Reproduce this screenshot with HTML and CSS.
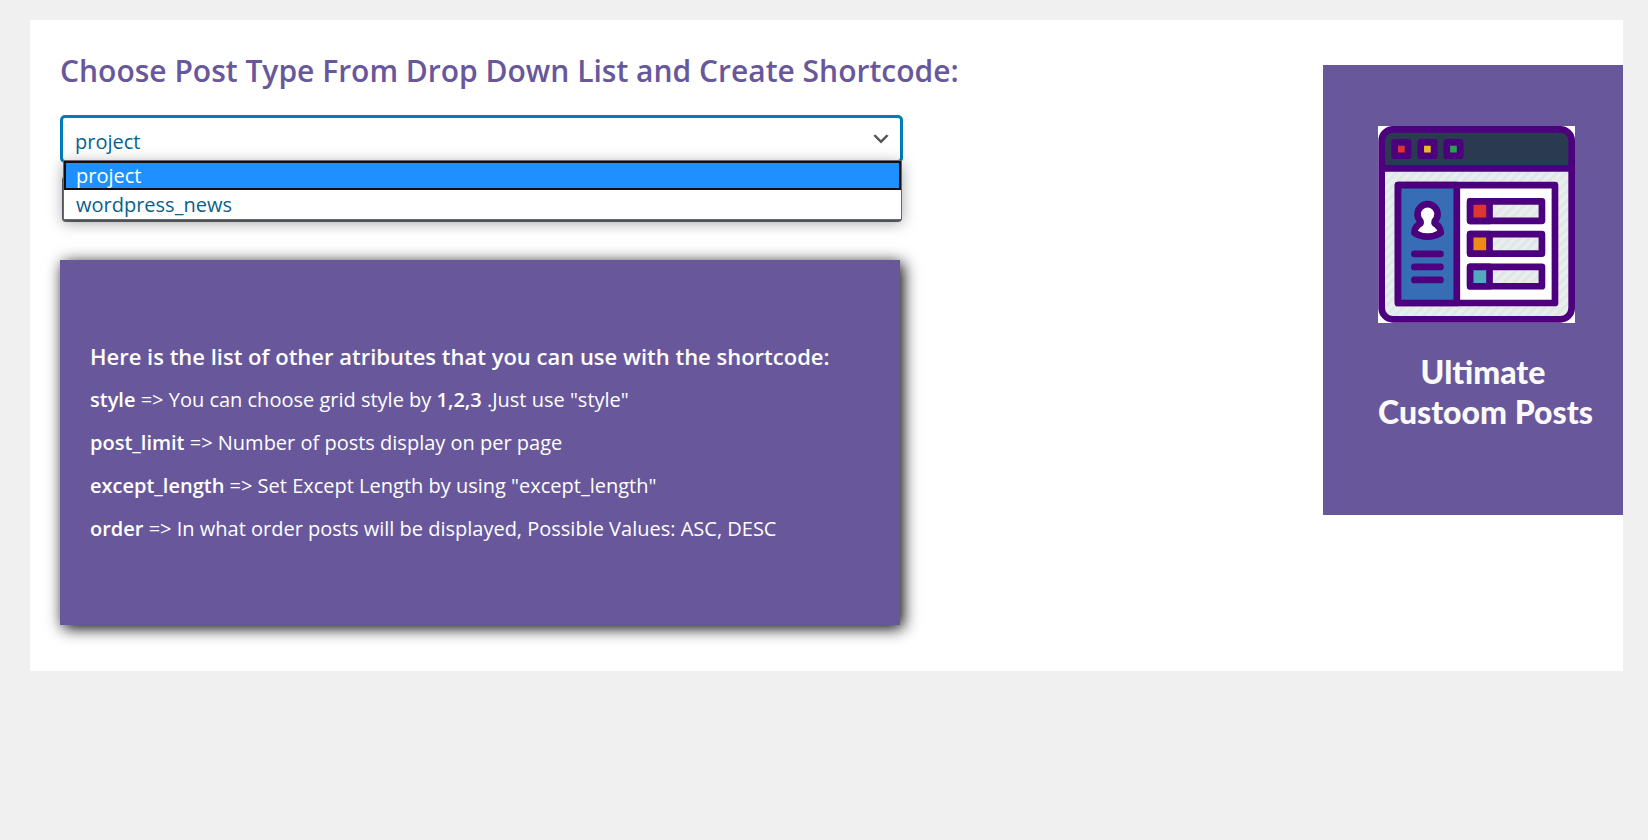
FILE: index.html
```html
<!DOCTYPE html>
<html lang="en">
<head>
<meta charset="utf-8">
<title>Ultimate Custom Posts</title>
<link rel="stylesheet" href="styles.css">
</head>
<body>
<main class="card">
  <section class="content">
    <h1 class="title"><label for="post-type">Choose Post Type From Drop Down List and Create Shortcode:</label></h1>
    <form class="form">
      <div class="picker">
        <select class="picker-select" id="post-type">
          <option>project</option>
          <option>wordpress_news</option>
        </select>
        <svg class="picker-arrow" viewBox="0 0 20 20" aria-hidden="true"><path d="M5 6l5 5 5-5 2 1-7 7-7-7z" fill="#555"/></svg>
        <ul class="menu" role="listbox" aria-label="Post type">
          <li class="menu-item menu-item-active" role="option" aria-selected="true">project</li>
          <li class="menu-item" role="option" aria-selected="false">wordpress_news</li>
        </ul>
      </div>
      <input class="shortcode" type="text" readonly aria-label="Shortcode">
    </form>
    <div class="help">
      <h2 class="help-title">Here is the list of other atributes that you can use with the shortcode:</h2>
      <p class="help-line"><b>style</b> =&gt; You can choose grid style by <b>1,2,3</b> .Just use "style"</p>
      <p class="help-line"><b>post_limit</b> =&gt; Number of posts display on per page</p>
      <p class="help-line"><b>except_length</b> =&gt; Set Except Length by using "except_length"</p>
      <p class="help-line"><b>order</b> =&gt; In what order posts will be displayed, Possible Values: ASC, DESC</p>
    </div>
  </section>
  <aside class="banner">
    <svg class="banner-logo" viewBox="205 228 590 590" aria-hidden="true">
      <defs>
        <pattern id="hatch" width="20" height="20" patternUnits="userSpaceOnUse" patternTransform="rotate(45)">
          <rect width="20" height="20" fill="#e8eded"/>
          <rect width="8" height="20" fill="#dfe6e6"/>
        </pattern>
      </defs>
      <rect x="205" y="228" width="590" height="590" fill="#fff"/>
      <rect x="216" y="238" width="569" height="569" rx="34" fill="url(#hatch)"/>
      <path d="M216 355V272q0-34 34-34H751q34 0 34 34V355z" fill="#2a3a50"/>
      <path d="M216 355H785" stroke="#4d007e" stroke-width="20"/>
      <rect x="216" y="238" width="569" height="569" rx="34" fill="none" stroke="#4d007e" stroke-width="20"/>
      <g stroke="#4d007e" stroke-width="20" stroke-linejoin="round">
        <rect x="255" y="277" width="40" height="40" fill="#e0352f"/>
        <rect x="333" y="277" width="40" height="40" fill="#f0bd18"/>
        <rect x="411" y="277" width="40" height="40" fill="#27a34c"/>
        <rect x="265" y="405" width="470" height="353" fill="#fff"/>
        <rect x="265" y="405" width="176" height="353" fill="#376db5"/>
        <rect x="481" y="454" width="215" height="58" fill="url(#hatch)"/>
        <rect x="481" y="552" width="215" height="58" fill="url(#hatch)"/>
        <rect x="481" y="650" width="215" height="58" fill="url(#hatch)"/>
        <rect x="481" y="454" width="58" height="58" fill="#df352f"/>
        <rect x="481" y="552" width="58" height="58" fill="#f08a17"/>
        <rect x="481" y="650" width="58" height="58" fill="#55a9bf"/>
        <path d="M332 513a30 30 0 1 1 43 0q-2 7 5 10q12 8 13 25q-40 23-79 0q1-17 13-25q7-3 5-10z" fill="#fff"/>
      </g>
      <path d="M314 611h78M314 650h78M314 689h78" stroke="#4d007e" stroke-width="20" stroke-linecap="round"/>
    </svg>
    <p class="banner-name">Ultimate<br>Custoom Posts</p>
  </aside>
</main>
</body>
</html>
```

FILE: styles.css
```css
* {
  box-sizing: border-box;
}

body {
  margin: 0;
  padding: 20px 25px 20px 30px;
  background: #f0f0f0;
  color: #0a5f8c;
  font-family: "Segoe UI", "Open Sans", "Noto Sans", sans-serif;
}

.card {
  display: flex;
  align-items: flex-start;
  justify-content: space-between;
  padding: 29px 0 46px 30px;
  background: #fff;
}

.content {
  flex: 1;
  min-width: 0;
}

.title {
  margin: 0;
  color: #68589b;
  font-size: 30px;
  font-weight: 600;
  line-height: 44px;
}

.form {
  display: flex;
  flex-direction: column;
  max-width: 843px;
  margin-top: 22px;
}

.picker {
  position: relative;
}

.picker-select {
  display: block;
  width: 100%;
  height: 48px;
  padding: 4px 12px 0;
  appearance: none;
  border: 3px solid #007cba;
  border-radius: 5px;
  background: #fff;
  color: #0a5f8c;
  font: inherit;
  font-size: 20px;
}

.picker-arrow {
  position: absolute;
  top: 13px;
  right: 11px;
  width: 22px;
  height: 22px;
}

.menu {
  position: absolute;
  top: 45px;
  left: 3px;
  right: 1px;
  margin: 0;
  padding: 0;
  border: 1px solid #646970;
  background: #fff;
  box-shadow: 0 3px 14px rgba(0, 0, 0, 0.35);
  list-style: none;
}

.menu-item {
  padding: 0 12px;
  font-size: 20px;
  line-height: 29px;
}

.menu-item-active {
  outline: 2px solid #101010;
  outline-offset: -2px;
  background: #1e90ff;
  color: #fff;
}

.shortcode {
  height: 46px;
  margin: 13px 1px 0 2px;
  padding: 0 12px;
  border: 2px solid #646970;
  border-radius: 4px;
  font: inherit;
}

.help {
  max-width: 840px;
  margin-top: 38px;
  padding: 80px 30px 75px;
  background: #68589b;
  box-shadow: 3px 3px 15px #000;
  color: #fff;
}

.help-title {
  margin: 0 0 6px;
  font-size: 22px;
  font-weight: 600;
  line-height: 32px;
}

.help-line {
  margin: 0;
  font-size: 20px;
  line-height: 43px;
}

.help-line b {
  font-weight: 600;
}

.banner {
  flex: 0 0 300px;
  min-width: 0;
  margin-top: 16px;
  padding: 61px 35px 83px 55px;
  background: #68589b;
}

.banner-logo {
  display: block;
  width: 197px;
  height: 197px;
}

.banner-name {
  margin: 29px 0 0;
  color: #fafafa;
  font-family: "Bauhaus 93", Lato, sans-serif;
  font-size: 32px;
  font-weight: 900;
  line-height: 40px;
  text-align: center;
  white-space: nowrap;
}
```
